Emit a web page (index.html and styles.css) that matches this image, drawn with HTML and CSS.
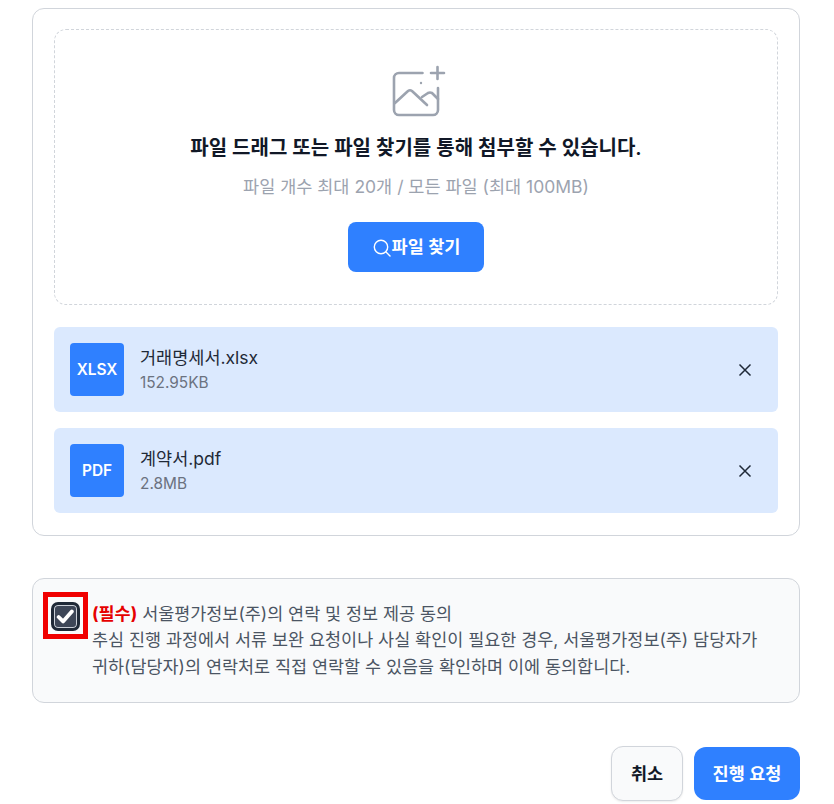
FILE: index.html
```html
<!DOCTYPE html>
<html lang="ko">
<head>
<meta charset="utf-8">
<title>파일 첨부</title>
<link rel="stylesheet" href="styles.css">
</head>
<body>
<main class="page">
  <section class="card">
    <div class="drop">
      <svg class="drop-icon" width="56" height="56" viewBox="0 0 56 56" fill="none" stroke="#9ca3af" stroke-width="2.6" stroke-linecap="round" stroke-linejoin="round">
        <path d="M32.5 8H9a5 5 0 0 0-5 5v32a5 5 0 0 0 5 5h34a5 5 0 0 0 5-5V23"/>
        <path d="M5 38l13-12q2-1.500 4 0l15 14"/>
        <path d="M32 32l6-4q2-1 4 0l6 6"/>
        <path d="M47.500 2v12M41 8h13"/>
        <circle cx="31" cy="18" r="1.200" fill="#9ca3af" stroke="none"/>
      </svg>
      <p class="drop-title">파일 드래그 또는 파일 찾기를 통해 첨부할 수 있습니다.</p>
      <p class="drop-sub">파일 개수 최대 20개 / 모든 파일 (최대 100MB)</p>
      <button class="find" type="button">
        <svg width="20" height="20" viewBox="0 0 20 20" fill="none" stroke="#fff" stroke-width="1.4" stroke-linecap="round"><circle cx="9" cy="10" r="6.700"/><path d="M14 15l4 4"/></svg>
        <span class="label">파일 찾기</span>
      </button>
    </div>
    <ul class="files">
      <li class="file">
        <span class="badge">XLSX</span>
        <div class="meta"><span class="name">거래명세서.xlsx</span><span class="size">152.95KB</span></div>
        <svg class="close" width="14" height="14" viewBox="0 0 14 14" fill="none" stroke="#1f2937" stroke-width="1.5"><path d="M1.5 1.5l11 11M12.5 1.5l-11 11"/></svg>
      </li>
      <li class="file">
        <span class="badge">PDF</span>
        <div class="meta"><span class="name">계약서.pdf</span><span class="size">2.8MB</span></div>
        <svg class="close" width="14" height="14" viewBox="0 0 14 14" fill="none" stroke="#1f2937" stroke-width="1.5"><path d="M1.5 1.5l11 11M12.5 1.5l-11 11"/></svg>
      </li>
    </ul>
  </section>

  <section class="consent">
    <span class="check-wrap">
      <span class="check">
        <svg width="19" height="17" viewBox="0 0 18 16" fill="none" stroke="#fff" stroke-width="3.6" stroke-linecap="round" stroke-linejoin="round"><path d="M2.500 8.500l4.200 4.200L15 3.200"/></svg>
      </span>
    </span>
    <p class="consent-text"><strong>(필수)</strong> 서울평가정보(주)의 연락 및 정보 제공 동의<br>추심 진행 과정에서 서류 보완 요청이나 사실 확인이 필요한 경우, 서울평가정보(주) 담당자가<br>귀하(담당자)의 연락처로 직접 연락할 수 있음을 확인하며 이에 동의합니다.</p>
  </section>

  <div class="actions">
    <button class="cancel" type="button">취소</button>
    <button class="submit" type="button">진행 요청</button>
  </div>
</main>
</body>
</html>
```
FILE: styles.css
```css
* { box-sizing: border-box; }
html, body { margin: 0; padding: 0; background: #fff; overflow: hidden; }
body, button { font-family: Inter, "Noto Sans CJK KR", sans-serif; }
.page { width: 834px; height: 804px; padding: 8px 34px 0 32px; overflow: hidden; }
.card {
  height: 528px;
  border: 1px solid #d1d5db;
  border-radius: 12px;
  padding: 20px 21px;
}
.drop {
  height: 276px;
  border: 1px dashed #d1d5db;
  border-radius: 12px;
  display: flex;
  flex-direction: column;
  align-items: center;
  padding-top: 35px;
}
.drop-icon { margin-left: 4px; display: block; }
.drop-title { margin: 13px 0 0; font-size: 20px; line-height: 28px; font-weight: 600; color: #111827; }
.drop-sub { margin: 13px 0 0; font-size: 17.5px; line-height: 24px; color: #9ca3af; }
.find {
  margin-top: 23px;
  width: 136px;
  height: 50px;
  border: 0;
  border-radius: 8px;
  background: #2f80ff;
  color: #fff;
  font-size: 17.5px;
  font-weight: 600;
  display: flex;
  align-items: center;
  justify-content: center;
  padding: 0;
}
.label { padding-bottom: 3px; }
.files { list-style: none; margin: 22px 0 0; padding: 0; display: flex; flex-direction: column; gap: 16px; }
.file {
  height: 85px;
  background: #dbe9fe;
  border-radius: 6px;
  display: flex;
  align-items: center;
  padding: 0 26px 0 16px;
}
.badge {
  width: 54px;
  height: 53px;
  border-radius: 4px;
  background: #2f80ff;
  color: #fff;
  font-size: 15.4px;
  font-weight: 600;
  display: flex;
  align-items: center;
  justify-content: center;
  flex: none;
}
.meta { flex: 1; display: flex; flex-direction: column; margin-left: 16px; }
.name { font-size: 17.5px; line-height: 26px; color: #1f2937; }
.size { font-size: 15.4px; line-height: 22px; margin-top: 1px; color: #6b7280; }
.close { flex: none; }
.consent {
  margin-top: 42px;
  height: 125px;
  border: 1px solid #d1d5db;
  border-radius: 12px;
  background: #f9fafb;
  display: flex;
  align-items: flex-start;
  padding: 13px 0 0 10px;
}
.check-wrap {
  width: 45px;
  height: 47px;
  border: 5px solid #f00000;
  display: flex;
  align-items: center;
  justify-content: center;
  padding: 2px 1px 0 0;
  flex: none;
}
.check {
  width: 29px;
  height: 29px;
  border: 3px solid #1f2937;
  border-radius: 7px;
  background: #3d4657;
  box-shadow: inset 0 0 0 1px #cbd0d8;
  display: flex;
  align-items: center;
  justify-content: center;
}
.consent-text { margin: 8.5px 0 0 4px; font-size: 17.46px; line-height: 26.5px; color: #4b5563; white-space: nowrap; }
.consent-text strong { color: #e60000; font-weight: 700; }
.actions { margin-top: 43px; display: flex; justify-content: flex-end; gap: 11px; align-items: flex-start; }
.cancel {
  width: 72px;
  height: 55px;
  border: 1px solid #d1d5db;
  border-radius: 12px;
  background: #f9fafb;
  color: #111827;
  font-size: 17.5px;
  font-weight: 600;
  padding: 0 0 3px;
  box-shadow: 0 1px 2px rgba(0,0,0,.08);
}
.submit {
  width: 106px;
  height: 53px;
  margin-top: 1px;
  border: 0;
  border-radius: 12px;
  background: #2f80ff;
  color: #fff;
  font-size: 17.5px;
  font-weight: 600;
  padding: 0 0 3px;
}
```
